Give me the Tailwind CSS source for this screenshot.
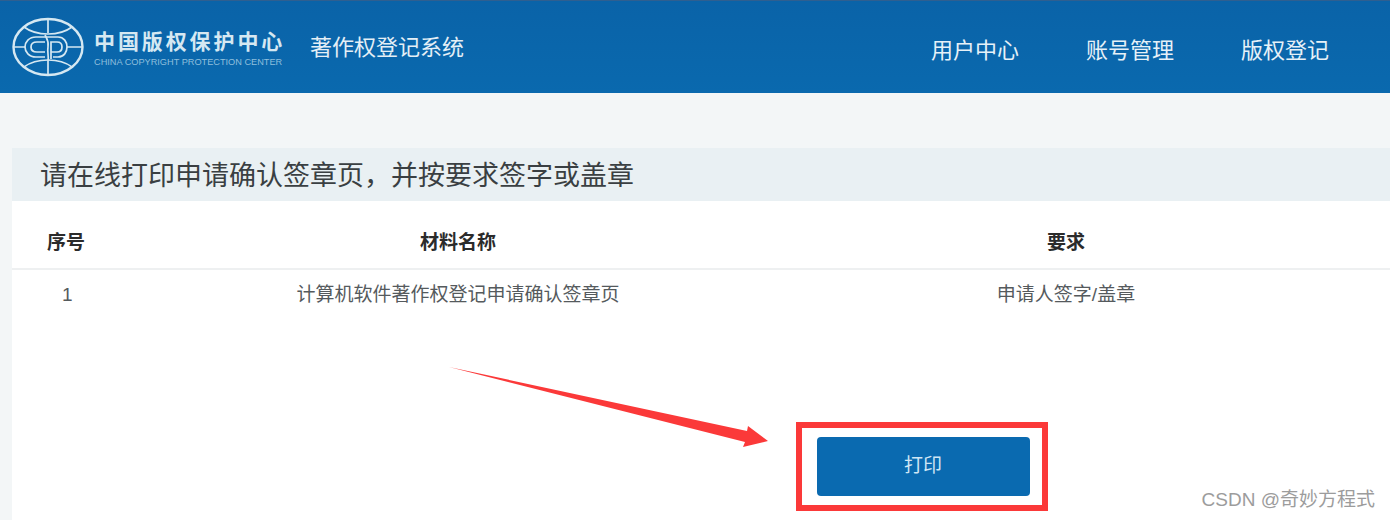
<!DOCTYPE html>
<html lang="zh-CN">
<head>
    <meta charset="UTF-8">
    <title>著作权登记系统</title>
    <script src="https://cdn.jsdelivr.net/npm/@tailwindcss/browser@4"></script>
</head>
<body class="bg-[#f3f6f7] font-['Liberation_Sans','Noto_Sans_CJK_SC',sans-serif]">
    <div class="relative w-[1390px] h-[520px] overflow-hidden">
        <!-- Header -->
        <header class="h-[93px] bg-gradient-to-b from-[#0a63a8] to-[#0a69ae] border-t border-[#2f5f90] flex items-center pl-3 text-white">
            <svg class="w-[72px] h-[60px] shrink-0" viewBox="0 0 72 60" fill="none" stroke="#d5e8f2" stroke-width="1.7">
                <ellipse cx="36" cy="30" rx="34.5" ry="28" stroke-width="2.4"/>
                <path d="M36 2V16M36 44V58"/>
                <path d="M33 18C35 22 37 24 36 30C35 36 37 38 36 44"/>
                <path d="M12 10C20 16 29 17 36 17C43 17 52 16 60 10"/>
                <path d="M12 50C20 44 29 43 36 43C43 43 52 44 60 50"/>
                <path d="M2 30H13M55 30H70"/>
                <path d="M36 20H24C17 20 13 25 13 30C13 35 17 40 24 40H33"/>
                <path d="M33 25H25C21 25 19 27 19 30C19 33 21 35 25 35H33"/>
                <path d="M36 20H46C52 20 55 25 55 30C55 35 52 40 46 40H41"/>
                <path d="M39 35H45C48 35 50 33 50 30C50 27 48 25 45 25H39V42"/>
            </svg>
            <div class="ml-[10px] w-[190px] shrink-0 text-[#d5e8f2]">
                <div class="text-[21px] leading-[26px] tracking-[2.9px] font-bold font-['Noto_Sans_CJK_SC',sans-serif] whitespace-nowrap">中国版权保护中心</div>
                <div class="mt-[5px] text-[9.2px] leading-[9px] text-[#8fbfdc] whitespace-nowrap">CHINA COPYRIGHT PROTECTION CENTER</div>
            </div>
            <div class="ml-[26px] pt-[1px] text-[22px] text-[#e4eff6] whitespace-nowrap">著作权登记系统</div>
            <nav class="ml-auto flex gap-[67px] pr-[61px] pt-[7px] text-[22px] text-[#e6f1f8]">
                <a>用户中心</a>
                <a>账号管理</a>
                <a>版权登记</a>
            </nav>
        </header>

        <!-- Card -->
        <section class="mt-[55px] ml-3 bg-white h-[372px]">
            <h2 class="h-[53px] bg-[#e9f0f3] pl-[28px] pt-[4px] flex items-center text-[27px] font-normal text-[#3a3f42]">请在线打印申请确认签章页，并按要求签字或盖章</h2>
            <div class="h-[69px] pt-[18px] border-b-2 border-[#eef0f1] flex items-center text-[19px] font-bold text-[#2b2b2b]">
                <div class="w-[108px] shrink-0 pl-[35px]">序号</div>
                <div class="w-[676px] shrink-0 text-center">材料名称</div>
                <div class="w-[540px] shrink-0 text-center">要求</div>
            </div>
            <div class="h-[49px] pt-[2px] flex items-center text-[19px] text-[#555a5d]">
                <div class="w-[108px] shrink-0 pl-[50px]">1</div>
                <div class="w-[676px] shrink-0 text-center">计算机软件著作权登记申请确认签章页</div>
                <div class="w-[540px] shrink-0 text-center">申请人签字/盖章</div>
            </div>
            <div class="mt-[103px] ml-[784px] w-[252px] h-[89px] border-[6px] border-[#fb3939] flex justify-center items-center">
                <button class="ml-[2px] w-[213px] h-[59px] bg-[#0a6ab0] rounded-[4px] text-[19px] text-[#cfe6f5]">打印</button>
            </div>
        </section>

        <!-- Arrow annotation -->
        <svg class="absolute left-[440px] top-[360px] w-[340px] h-[100px]" viewBox="0 0 340 100">
            <path d="M9 7L307 71L308 66L328 81L303 87L305 82Z" fill="#fb3939"/>
        </svg>

        <div class="absolute right-[15px] bottom-[8px] text-[19px] leading-[24px] text-[#9c9c9c]">CSDN @奇妙方程式</div>
    </div>
</body>
</html>
